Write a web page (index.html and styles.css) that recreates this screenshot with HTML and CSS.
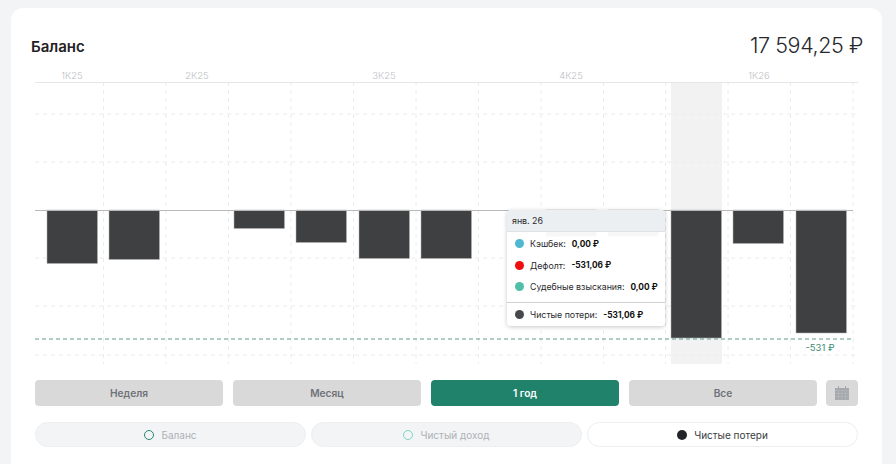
FILE: index.html
```html
<!DOCTYPE html>
<html lang="ru">
<head>
<meta charset="utf-8">
<title>Баланс</title>
<link rel="stylesheet" href="styles.css">
</head>
<body>
<main class="card">
  <header class="head">
    <h1 class="title">Баланс</h1>
    <div class="total">17 594,25 ₽</div>
  </header>
  <div class="chart">
    <svg class="plot" width="824" height="294" viewBox="35 70 824 294" xmlns="http://www.w3.org/2000/svg">
      <rect class="hl" x="671" y="82" width="51" height="282"/>
      <g class="grid-v">
        <path d="M103.500 82V364M166 82V364M228.500 82V364M291 82V364M353.500 82V364M416 82V364M478.500 82V364M541 82V364M603.500 82V364M665.500 82V364M728 82V364M790.500 82V364M853 82V364"/>
      </g>
      <g class="grid-h">
        <path d="M35 114H858M35 162H858M35 258H858M35 306H858M35 355H858"/>
      </g>
      <path class="top" d="M35 82.500H858"/>
      <text class="tick" x="72" y="79" text-anchor="middle">1К25</text>
      <text class="tick" x="197" y="79" text-anchor="middle">2К25</text>
      <text class="tick" x="384" y="79" text-anchor="middle">3К25</text>
      <text class="tick" x="571" y="79" text-anchor="middle">4К25</text>
      <text class="tick" x="759" y="79" text-anchor="middle">1К26</text>
      <g class="bars">
        <rect x="47" y="210" width="50.500" height="53.500"/>
        <rect x="109" y="210" width="50.500" height="49.500"/>
        <rect x="234" y="210" width="50.500" height="18.500"/>
        <rect x="296" y="210" width="50.500" height="32.500"/>
        <rect x="359" y="210" width="50.500" height="48.500"/>
        <rect x="421" y="210" width="50.500" height="48.500"/>
        <rect x="546" y="210" width="50.500" height="26.500"/>
        <rect x="608" y="210" width="50.500" height="26.500"/>
        <rect x="671" y="210" width="50.500" height="128"/>
        <rect x="733" y="210" width="50.500" height="33.500"/>
        <rect x="796" y="210" width="50.500" height="123"/>
      </g>
      <path class="axis" d="M35 210.500H853"/>
      <path class="limit" d="M35 339H853"/>
      <text class="limit-label" x="820" y="351" text-anchor="middle">-531 ₽</text>
    </svg>
    <div class="tip">
      <div class="tip-head">янв. 26</div>
      <div class="tip-rows">
        <div class="tip-row"><span class="dot dot-cash"></span><span>Кэшбек:</span><b>0,00 ₽</b></div>
        <div class="tip-row"><span class="dot dot-def"></span><span>Дефолт:</span><b>-531,06 ₽</b></div>
        <div class="tip-row"><span class="dot dot-court"></span><span>Судебные взыскания:</span><b>0,00 ₽</b></div>
      </div>
      <div class="tip-row tip-sum"><span class="dot dot-net"></span><span>Чистые потери:</span><b>-531,06 ₽</b></div>
    </div>
  </div>
  <div class="periods">
    <button class="period">Неделя</button>
    <button class="period">Месяц</button>
    <button class="period period-on">1 год</button>
    <button class="period">Все</button>
    <button class="cal" aria-label="Календарь">
      <svg width="14" height="14" viewBox="0 0 14 14" xmlns="http://www.w3.org/2000/svg"><path fill="#a5a9ae" d="M3 0h1v2h6V0h1v2h3v12H0V2h3z"/><path fill="#b9bbbe" d="M0 4.500h14v.6H0zM0 7.400h14v.6H0zM0 10.400h14v.6H0zM3.300 5h.6v9h-.6zM6.700 5h.6v9h-.6zM10.100 5h.6v9h-.6z"/></svg>
    </button>
  </div>
  <div class="legend">
    <div class="leg"><span class="ring ring-bal"></span>Баланс</div>
    <div class="leg"><span class="ring ring-inc"></span>Чистый доход</div>
    <div class="leg leg-on"><span class="solid"></span>Чистые потери</div>
  </div>
</main>
</body>
</html>
```
FILE: styles.css
```css
* { box-sizing: border-box; }
html, body { margin: 0; height: 100%; }
body {
  background: #f2f4f6;
  font-family: Inter, "Liberation Sans", sans-serif;
  overflow: hidden;
  padding: 8px 14px 0 11px;
}
.card {
  background: #fff;
  border-radius: 12px 12px 0 0;
  height: 456px;
  padding: 0 24px;
  display: flex;
  flex-direction: column;
}
.head {
  display: flex;
  justify-content: space-between;
  align-items: center;
  height: 62px;
  padding-top: 12px;
}
.title { margin: 2px 0 0 -4px; font-size: 15px; font-weight: 600; color: #1f2124; }
.total { font-size: 21.500px; font-weight: 300; letter-spacing: -.4px; color: #26282c; margin-right: -5px; }
.chart { position: relative; height: 294px; }
.plot { display: block; }
.hl { fill: #f2f2f2; }
.grid-v path, .grid-h path { fill: none; stroke: #ececec; stroke-width: 1; stroke-dasharray: 4 4; }
.top { stroke: #e6e6e6; fill: none; }
.tick { font-size: 9.500px; font-weight: 300; fill: #bcbec2; font-family: Inter, "Liberation Sans", sans-serif; }
.bars rect { fill: #3f4042; stroke: #b5b5b5; stroke-width: .5; }
.axis { stroke: #b9b9b9; fill: none; }
.limit { stroke: #5f9d8c; fill: none; stroke-dasharray: 4 3; }
.limit-label { font-size: 9.500px; fill: #3d8a75; font-family: Inter, "Liberation Sans", sans-serif; }
.tip {
  position: absolute;
  left: 472px;
  top: 140px;
  width: 158px;
  height: 116px;
  background: rgba(255,255,255,.96);
  border-radius: 4px;
  box-shadow: 0 1px 4px rgba(0,0,0,.22);
  font-size: 8.800px;
  color: #2a2b2e;
  overflow: hidden;
}
.tip-head { height: 22px; line-height: 21px; padding-left: 5px; background: #eceff1; border-bottom: 1px solid #dfe1e3; }
.tip-rows { padding-top: 1px; height: 71px; border-bottom: 1px solid #cfd0d2; }
.tip-row { display: flex; align-items: center; height: 21.500px; padding-left: 8px; gap: 6px; }
.tip-row b { font-weight: 700; font-size: 8.300px; color: #111; }
.tip-sum { height: 23px; }
.dot { width: 9px; height: 9px; border-radius: 50%; flex: none; }
.dot-cash { background: #4fb8d0; }
.dot-def { background: #f00d0d; }
.dot-court { background: #4fbfa8; }
.dot-net { background: #47484b; }
.periods { display: flex; gap: 10px; margin-top: 16px; height: 26px; }
.period {
  flex: 1;
  border: 0;
  border-radius: 4px;
  background: #d9d9d9;
  color: #6f7278;
  font: 600 10.200px Inter, "Liberation Sans", sans-serif;
  padding: 0;
}
.period-on { background: #20826a; color: #fff; }
.cal { width: 32px; flex: none; margin-left: -1px; border: 0; border-radius: 4px; background: #d9d9d9; padding: 0; display: flex; align-items: center; justify-content: center; }
.legend { display: flex; gap: 5px; margin-top: 16px; height: 25px; }
.leg {
  flex: 1;
  display: flex;
  align-items: center;
  justify-content: center;
  gap: 7px;
  border-radius: 13px;
  background: #f2f4f6;
  border: 1px solid #eceef0;
  color: #aeb1b5;
  font-size: 10px;
}
.leg-on { background: #fff; color: #3a3c40; }
.ring { width: 10px; height: 10px; border-radius: 50%; border: 1.500px solid; }
.ring-bal { border-color: #2f8570; }
.ring-inc { border-color: #7fd6bd; }
.solid { width: 10px; height: 10px; border-radius: 50%; background: #232427; }
```
